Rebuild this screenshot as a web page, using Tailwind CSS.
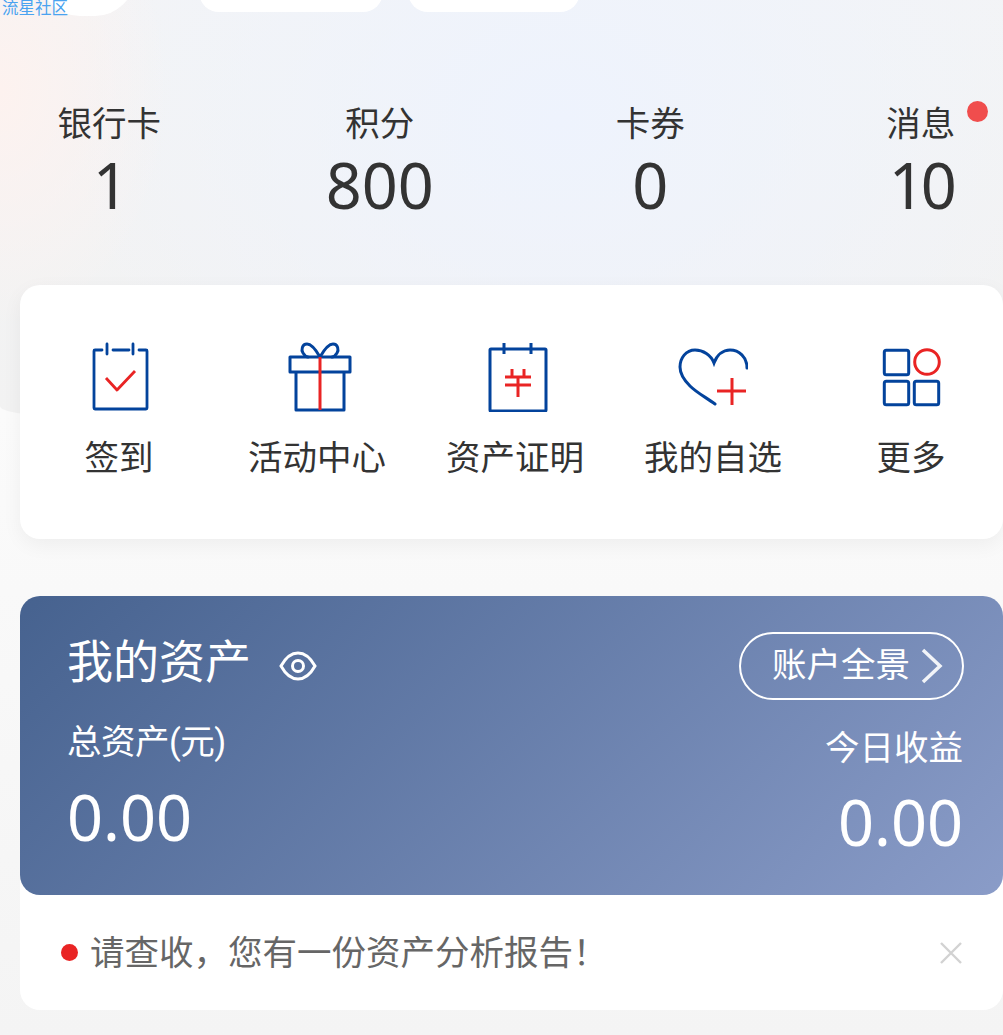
<!DOCTYPE html>
<html lang="zh">
<head>
<meta charset="utf-8">
<script src="https://cdn.jsdelivr.net/npm/@tailwindcss/browser@4"></script>
<title>我的</title>
</head>
<body class="m-0 bg-[#f5f5f5]">
<div class="relative w-[1003px] h-[1035px] overflow-hidden bg-[linear-gradient(180deg,#fbfbfb_40%,#f4f4f4_100%)] font-['Roboto','Noto_Sans_CJK_SC',sans-serif]">
  <!-- header wash -->
  <div class="absolute left-0 top-0 w-full h-[416px] rounded-bl-[60px_10px] bg-[radial-gradient(ellipse_170px_240px_at_0px_90px,#fdf2ef_0%,rgba(253,242,239,0)_100%),radial-gradient(ellipse_500px_400px_at_560px_120px,#eef3fd_0%,rgba(238,243,253,0)_100%),linear-gradient(180deg,#f3f4f6_0%,#f2f2f2_100%)]"></div>

  <!-- cut-off buttons at the very top -->
  <div class="absolute left-[40px] top-[-40px] w-[95px] h-[56px] rounded-b-[40px] bg-white"></div>
  <div class="absolute left-[199px] top-[-20px] w-[184px] h-[32px] rounded-b-[20px] bg-white"></div>
  <div class="absolute left-[408px] top-[-20px] w-[172px] h-[32px] rounded-b-[20px] bg-white"></div>
  <div class="absolute left-[2px] top-0 text-[16.5px] leading-[17px] text-[#4aa3f0]">流星社区</div>

  <div class="relative flex flex-col h-full">
    <!-- stats -->
    <div class="h-[285px] pt-[103px] grid grid-cols-[270.5px_270.5px_270.5px_270.5px] ml-[-26px] w-[1082px]">
      <div class="flex flex-col items-center text-[#333]"><span class="text-[34.5px] leading-[42px]">银行卡</span><span class="font-['Noto_Sans'] text-[63px] leading-[68px] mt-[6px] pl-[3px]">1</span></div>
      <div class="flex flex-col items-center text-[#333]"><span class="text-[34.5px] leading-[42px]">积分</span><span class="font-['Noto_Sans'] text-[63px] leading-[68px] mt-[6px]">800</span></div>
      <div class="flex flex-col items-center text-[#333]"><span class="text-[34.5px] leading-[42px]">卡券</span><span class="font-['Noto_Sans'] text-[63px] leading-[68px] mt-[6px]">0</span></div>
      <div class="relative flex flex-col items-center text-[#333]"><span class="text-[34.5px] leading-[42px]">消息</span><span class="font-['Noto_Sans'] text-[63px] leading-[68px] mt-[6px] tracking-[-4px]">10</span><span class="absolute left-[181px] top-[-2px] w-[21px] h-[21px] rounded-full bg-[#f04d4d]"></span></div>
    </div>

    <!-- actions -->
    <div class="ml-[20px] w-[983px] h-[254px] rounded-[20px] bg-white shadow-[0_6px_20px_rgba(0,0,0,0.05)] flex pt-[57px]">
      <div class="w-[198px] shrink-0 flex flex-col items-center">
        <svg class="w-[70px] h-[70px]" viewBox="0 0 70 70" fill="none" stroke="#03439c" stroke-width="2.800" stroke-linecap="round" stroke-linejoin="round"><path d="M18 8h-7a1 1 0 0 0-1 1v57a1 1 0 0 0 1 1h51a1 1 0 0 0 1-1V9a1 1 0 0 0-1-1h-7M29 8h16M23 2v10M49 2v10"/><path d="M22 36l11 12 18-19" stroke="#e92424" stroke-linecap="butt"/></svg>
        <span class="mt-[25px] text-[34.5px] leading-[42px] text-[#333]">签到</span>
      </div>
      <div class="w-[198px] shrink-0 flex flex-col items-center"><svg class="w-[70px] h-[70px]" viewBox="0 0 70 70" fill="none" stroke="#03439c" stroke-width="3" stroke-linecap="round" stroke-linejoin="round"><path d="M8 15h60v15H8zM14 30v38h48V30"/><path d="M38 15C34 8 30 2 25 2c-5 0-6 6-4 9 2 3 3 4 5 4M38 15c4-7 8-13 13-13 5 0 6 6 4 9-2 3-3 4-5 4"/><path d="M38 15v53" stroke="#e92424" stroke-width="3" stroke-linecap="butt"/></svg><span class="mt-[25px] text-[34.5px] leading-[42px] text-[#333]">活动中心</span></div>
      <div class="w-[198px] shrink-0 flex flex-col items-center"><svg class="w-[70px] h-[70px]" viewBox="0 0 70 70" fill="none" stroke="#03439c" stroke-width="3" stroke-linejoin="round"><path d="M11 7h54a1 1 0 0 1 1 1v60a1 1 0 0 1-1 1H11a1 1 0 0 1-1-1V8a1 1 0 0 1 1-1z"/><path d="M24 1v11M51 1v11"/><path d="M32 27v8M44 27v8M25 35h26M25 43h26M38 35v20" stroke="#e92424"/></svg><span class="mt-[25px] text-[34.5px] leading-[42px] text-[#333]">资产证明</span></div>
      <div class="w-[198px] shrink-0 flex flex-col items-center"><svg class="w-[70px] h-[70px]" viewBox="0 0 70 70" fill="none" stroke="#03439c" stroke-width="3" stroke-linecap="round"><path d="M69 26C69 15 61 8 52 8 45 8 39 13 36 21 33 13 25 8 17 8 8 8 2 16 2 25c0 8 5 14 10 19 7 7 17 12 25 18"/><path d="M54 36v27M39 49h29" stroke="#e92424" stroke-linecap="butt"/></svg><span class="mt-[25px] text-[34.5px] leading-[42px] text-[#333]">我的自选</span></div>
      <div class="w-[198px] shrink-0 flex flex-col items-center"><svg class="w-[70px] h-[70px]" viewBox="0 0 70 70" fill="none" stroke="#03439c" stroke-width="3" stroke-linejoin="round"><rect x="8.300" y="8.300" width="24.400" height="24.400" rx="2"/><rect x="8.300" y="39.300" width="24.400" height="23.400" rx="2"/><rect x="38.300" y="39.300" width="24.400" height="23.400" rx="2"/><circle cx="51" cy="20" r="12.300" stroke="#e92424"/></svg><span class="mt-[25px] text-[34.5px] leading-[42px] text-[#333]">更多</span></div>
    </div>

    <!-- assets -->
    <div class="ml-[20px] mt-[57px] w-[983px] h-[414px] rounded-[20px] bg-white">
      <div class="relative h-[299px] rounded-[20px] bg-[linear-gradient(135deg,#46628f_0%,#8a9cc8_100%)] text-white">
        <div class="flex items-center pl-[47px] pt-[36px]"><span class="text-[46px] leading-[60px]">我的资产</span>
          <svg class="ml-[28px] mt-[8px] w-[38px] h-[30px]" viewBox="0 0 38 30" fill="none" stroke="#fff" stroke-width="3"><path d="M2 15C7 6 13 2 19 2s12 4 17 13C31 24 25 28 19 28S7 24 2 15z"/><circle cx="19" cy="15" r="5.500"/></svg></div>
        <div class="absolute right-[39px] top-[36px] w-[225px] h-[68px] rounded-full border-2 border-white flex items-center pl-[31px] text-[34.5px]">账户全景<svg class="ml-[11px] w-[22px] h-[36px]" viewBox="0 0 22 36" fill="none" stroke="#fff" stroke-opacity="0.9" stroke-width="3.500"><path d="M2 2l17 16L2 34"/></svg></div>
        <div class="absolute left-[47px] top-[124px] text-[34.5px] leading-[44px] tracking-[-0.5px]">总资产(元)</div>
        <div class="absolute left-[47px] top-[186px] font-['Noto_Sans'] text-[63px] leading-[70px]">0.00</div>
        <div class="absolute right-[40px] top-[130px] text-[34.5px] leading-[44px]">今日收益</div>
        <div class="absolute right-[40px] top-[191px] font-['Noto_Sans'] text-[63px] leading-[70px]">0.00</div>
      </div>
      <div class="relative flex items-center h-[115px] pl-[41px] text-[#666]">
        <span class="w-[17px] h-[17px] rounded-full bg-[#e92424]"></span>
        <span class="ml-[12px] text-[34.5px] leading-[44px]">请查收，您有一份资产分析报告！</span>
        <svg class="absolute left-[919px] top-[46px] w-[24px] h-[24px]" viewBox="0 0 24 24" fill="none" stroke="#d2d2d2" stroke-width="2.400"><path d="M2 2l20 20M22 2L2 22"/></svg>
      </div>
    </div>
  </div>
</div>
</body>
</html>
